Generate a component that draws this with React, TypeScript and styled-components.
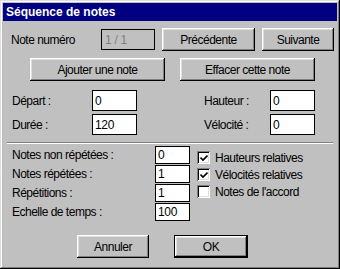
import * as React from 'react';
import styled, { createGlobalStyle } from 'styled-components';

const UI_FONT = '"Liberation Sans", Arial, sans-serif';

const GlobalStyle = createGlobalStyle`
  html, body {
    margin: 0;
    padding: 0;
    background: #c0c0c0;
  }
  body {
    font-family: ${UI_FONT};
    font-size: 12px;
    letter-spacing: -0.5px;
    color: #000;
  }
`;

const Window = styled.div`
  box-sizing: border-box;
  width: 340px;
  height: 269px;
  padding: 3px;
  background: #c0c0c0;
  box-shadow: inset -1px -1px #000, inset 1px 1px #dfdfdf, inset -2px -2px #808080,
    inset 2px 2px #fff;
  display: flex;
  flex-direction: column;
`;

const TitleBar = styled.div`
  height: 18px;
  background: #000080;
  color: #fff;
  font-weight: bold;
  font-size: 12px;
  letter-spacing: 0;
  line-height: 18px;
  padding-left: 3px;
`;

const Row = styled.div<{ $top: number; $left: number }>`
  display: flex;
  align-items: center;
  margin-top: ${(p) => p.$top}px;
  padding-left: ${(p) => p.$left}px;
`;

const Label = styled.span<{ $width: number; $gap?: number }>`
  width: ${(p) => p.$width}px;
  margin-left: ${(p) => p.$gap ?? 0}px;
  flex: none;
  white-space: nowrap;
`;

const Field = styled.input<{ $width: number; $height?: number }>`
  box-sizing: border-box;
  width: ${(p) => p.$width}px;
  height: ${(p) => p.$height ?? 21}px;
  margin: 0;
  padding: 0 0 0 2px;
  border: 1px solid #000;
  background: #fff;
  font-family: ${UI_FONT};
  font-size: 12px;
  letter-spacing: -0.3px;
  color: #000;
  outline: none;

  &:disabled {
    background: #c0c0c0;
    color: #808080;
    padding-left: 3px;
  }
`;

const Button = styled.button<{ $width: number; $gap?: number; $default?: boolean }>`
  box-sizing: border-box;
  width: ${(p) => p.$width}px;
  height: 23px;
  margin: 0 0 0 ${(p) => p.$gap ?? 0}px;
  padding: 0;
  border: ${(p) => (p.$default ? '1px solid #000' : 'none')};
  background: #c0c0c0;
  font-family: ${UI_FONT};
  font-size: 12px;
  letter-spacing: -0.5px;
  color: #000;
  box-shadow: inset -1px -1px #000, inset 1px 1px #fff, inset -2px -2px #808080,
    inset 2px 2px #dfdfdf;
  flex: none;
`;

const Separator = styled.div`
  height: 2px;
  margin: 7px 4px 2px 4px;
  border-top: 1px solid #808080;
  border-bottom: 1px solid #fff;
  box-sizing: border-box;
`;

const Options = styled.div`
  display: flex;
  align-items: flex-start;
  padding-left: 9px;
`;

const Counts = styled.div`
  display: grid;
  grid-template-columns: 143px 35px;
  grid-auto-rows: 18px;
  row-gap: 1px;
  align-items: center;
`;

const Checks = styled.div`
  display: flex;
  flex-direction: column;
  gap: 4px;
  margin: 5px 0 0 7px;
`;

const CheckRow = styled.label`
  display: flex;
  align-items: center;
  gap: 5px;
  height: 13px;
  white-space: nowrap;
`;

const Box = styled.span`
  box-sizing: border-box;
  width: 13px;
  height: 13px;
  background: #fff;
  box-shadow: inset 1px 1px #808080, inset -1px -1px #fff, inset 2px 2px #000,
    inset -2px -2px #dfdfdf;
  display: flex;
  align-items: center;
  justify-content: center;
`;

const Check = ({ checked, label }: { checked: boolean; label: string }) => (
  <CheckRow>
    <Box>
      {checked && (
        <svg width="8" height="8" viewBox="0 0 8 8">
          <path d="M0.5 3.5 L3 6 L7.5 1.5" fill="none" stroke="#000" strokeWidth="1.6" />
        </svg>
      )}
    </Box>
    <span>{label}</span>
  </CheckRow>
);

const App = () => {
  return (
    <>
      <GlobalStyle />
      <Window>
        <TitleBar>Séquence de notes</TitleBar>

        <Row $top={7} $left={8}>
          <Label $width={90}>Note numéro</Label>
          <Field $width={54} disabled defaultValue="1 / 1" />
          <Button $width={93} $gap={7}>Précédente</Button>
          <Button $width={72} $gap={7}>Suivante</Button>
        </Row>

        <Row $top={7} $left={27}>
          <Button $width={135}>Ajouter une note</Button>
          <Button $width={135} $gap={15}>Effacer cette note</Button>
        </Row>

        <Row $top={9} $left={9}>
          <Label $width={80}>Départ :</Label>
          <Field $width={45} readOnly defaultValue="0" />
          <Label $width={66} $gap={67}>Hauteur :</Label>
          <Field $width={45} readOnly defaultValue="0" />
        </Row>

        <Row $top={3} $left={9}>
          <Label $width={80}>Durée :</Label>
          <Field $width={45} readOnly defaultValue="120" />
          <Label $width={66} $gap={67}>Vélocité :</Label>
          <Field $width={45} readOnly defaultValue="0" />
        </Row>

        <Separator />

        <Options>
          <Counts>
            <Label $width={143}>Notes non répétées :</Label>
            <Field $width={35} $height={18} readOnly defaultValue="0" />
            <Label $width={143}>Notes répétées :</Label>
            <Field $width={35} $height={18} readOnly defaultValue="1" />
            <Label $width={143}>Répétitions :</Label>
            <Field $width={35} $height={18} readOnly defaultValue="1" />
            <Label $width={143}>Echelle de temps :</Label>
            <Field $width={35} $height={18} readOnly defaultValue="100" />
          </Counts>
          <Checks>
            <Check checked label="Hauteurs relatives" />
            <Check checked label="Vélocités relatives" />
            <Check checked={false} label="Notes de l'accord" />
          </Checks>
        </Options>

        <Row $top={14} $left={74}>
          <Button $width={72}>Annuler</Button>
          <Button $width={74} $gap={25} $default>OK</Button>
        </Row>
      </Window>
    </>
  );
};

export default App;
